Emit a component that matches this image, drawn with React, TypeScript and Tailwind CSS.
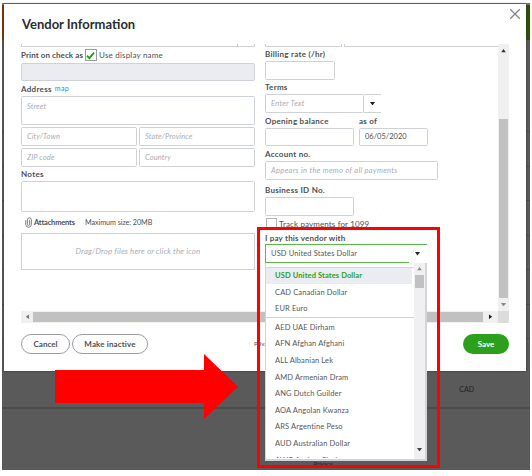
const currencies = [
  "AED UAE Dirham",
  "AFN Afghan Afghani",
  "ALL Albanian Lek",
  "AMD Armenian Dram",
  "ANG Dutch Guilder",
  "AOA Angolan Kwanza",
  "ARS Argentine Peso",
  "AUD Australian Dollar",
  "AWG Aruban Florin",
];

const Caret = ({ className = "" }) => (
  <svg viewBox="0 0 6 4" preserveAspectRatio="none" className={`h-[3.5px] w-[5px] shrink-0 fill-current ${className}`}>
    <path d="M0 0h6L3 4z" />
  </svg>
);

const Label = ({ children, className = "" }) => (
  <div className={`flex items-center whitespace-nowrap text-[8px] font-bold leading-none text-[#4d5055] ${className}`}>
    {children}
  </div>
);

const Field = ({ children, className = "", fill = "bg-white", text = "italic text-[#a9acb5]" }) => (
  <div className={`flex items-center whitespace-nowrap rounded-[1.5px] border border-[#cfd1d8] pl-[5px] text-[7.5px] leading-none ${fill} ${text} ${className}`}>
    {children}
  </div>
);

const LeftColumn = () => (
  <div className="flex w-[234px] flex-col">
    <div className="flex h-[3px] justify-end rounded-b-[1px] border border-t-0 border-[#cfd1d8] pr-[16px]">
      <div className="h-[2px] w-px bg-[#cfd1d8]" />
    </div>
    <Label className="h-[16px]">
      <span className="tracking-[0.08px]">Print on check as</span>
      <span className="ml-[2px] flex h-[12px] w-[12px] items-center justify-center border border-[#9b9da3]">
        <svg viewBox="0 0 10 10" className="h-[9px] w-[9px]" fill="none" stroke="#18a010" strokeWidth="2">
          <path d="M1 5.2l2.7 2.7L9 1.8" />
        </svg>
      </span>
      <span className="ml-[2px] font-normal tracking-[0.2px]">Use display name</span>
    </Label>
    <Field className="h-[18px]" fill="bg-[#ebecf1]" />
    <Label className="h-[15px] tracking-[0.3px]">
      Address <span className="ml-[3px] text-[7px] font-normal text-[#2090dd]">map</span>
    </Label>
    <div className="flex h-[29px] rounded-[1.5px] border border-[#cfd1d8] pl-[5px] pt-[6px] text-[7.5px] italic leading-none tracking-[0.1px] text-[#a9acb5]">
      Street
    </div>
    <div className="mt-[2px] grid grid-cols-2 gap-[2px] tracking-[0.1px]">
      <Field className="h-[19px]">City/Town</Field>
      <Field className="h-[19px]">State/Province</Field>
      <Field className="h-[19px]">ZIP code</Field>
      <Field className="h-[19px]">Country</Field>
    </div>
    <Label className="h-[14px] tracking-[0.3px]">Notes</Label>
    <Field className="h-[31px]" />
    <Label className="h-[21px] pl-[4px]">
      <svg viewBox="0 0 8 12" className="mr-[2px] h-[11px] w-[7px]" fill="none" stroke="#5c5f64" strokeWidth="0.9">
        <path d="M5.3 3v5a1.3 1.3 0 0 1-2.6 0V3a2.2 2.2 0 0 1 4.6 0v5.2a3.2 3.2 0 0 1-6.5 0V3.5" />
      </svg>
      <span className="w-[51px] text-[7.5px] tracking-[-0.18px]">Attachments</span>
      <span className="text-[7.2px] font-normal tracking-[-0.05px]">Maximum size: 20MB</span>
    </Label>
    <div className="flex h-[37px] items-center justify-center border border-[#cfd1d8] text-[7.8px] italic tracking-[0.18px] text-[#a9acb5]">
      Drag/Drop files here or click the icon
    </div>
  </div>
);

const RightColumn = () => (
  <div className="ml-[10px] flex w-[233px] flex-col tracking-[0.27px]">
    <div className="flex h-[3px] gap-[2px]">
      <div className="w-[77px] border border-t-0 border-[#cfd1d8]" />
      <div className="flex-1 border-b border-l border-[#cfd1d8]" />
    </div>
    <Label className="h-[14px]">Billing rate (/hr)</Label>
    <Field className="h-[19px] w-[70px]" />
    <Label className="h-[14px]">Terms</Label>
    <div className="flex w-[116px]">
      <Field className="h-[19px] w-[99px]">Enter Text</Field>
      <div className="flex h-[19px] flex-1 items-center justify-center border-y border-[#cfd1d8] text-[#1d1d1d]">
        <Caret />
      </div>
    </div>
    <div className="flex h-[15px]">
      <Label className="w-[94px]">Opening balance</Label>
      <Label>as of</Label>
    </div>
    <div className="flex gap-[5px]">
      <Field className="h-[18px] w-[89px]" />
      <Field className="h-[18px] w-[69px] tracking-[0px]" text="text-[#4d5055]">06/05/2020</Field>
    </div>
    <Label className="h-[15px]">Account no.</Label>
    <Field className="h-[19px] w-[173px] tracking-[0.33px]">Appears in the memo of all payments</Field>
    <Label className="h-[17px] pt-[3px]">Business ID No.</Label>
    <Field className="h-[19px] w-[89px]" />
    <div className="mt-[2px] flex h-[12px] items-center whitespace-nowrap text-[8px] leading-none tracking-[0.13px] text-[#4d5055]">
      <span className="ml-px mr-[2px] h-[12px] w-[11px] border border-[#b2b4ba]" />
      Track payments for 1099
    </div>
    <Label className="h-[15px] tracking-[0.2px]">I pay this vendor with</Label>
  </div>
);

const Option = ({ children, className = "" }) => (
  <div className={`flex h-[16.67px] shrink-0 items-center whitespace-nowrap pl-[9px] ${className}`}>{children}</div>
);

const CurrencySelect = () => (
  <div className="absolute left-[265px] top-[244px] w-[162px] text-[7.5px] leading-none tracking-[0.12px] text-[#54575c]">
    <div className="relative flex h-[19px] items-center justify-between border-l border-t border-[#5bb947] bg-white pl-[5px] pr-[7px]">
      USD United States Dollar
      <Caret className="text-[#222]" />
      <div className="absolute bottom-0 left-0 h-px w-[143px] bg-[#5bb947]" />
    </div>
    <div className="flex h-[198px] border-b-2 border-l border-r-2 border-[#d2d4da] bg-white">
      <div className="flex h-[195px] w-[148px] flex-col overflow-hidden">
        <div className="h-[4.5px] shrink-0 border-b border-[#d2d4da]" />
        <Option className="mr-[2px] bg-[#ebecf1] font-bold text-[#2ca01c]">USD United States Dollar</Option>
        <Option>CAD Canadian Dollar</Option>
        <Option>EUR Euro</Option>
        <div className="mb-[0.5px] h-px shrink-0 bg-[#cfd1d8]" />
        {currencies.map((name) => (
          <Option key={name}>{name}</Option>
        ))}
      </div>
      <div className="flex flex-1 flex-col items-center justify-between bg-[#f0f0f0] pb-[8px]">
        <div className="flex w-full flex-col items-center">
          <div className="flex h-[12px] items-center text-[#8a8a8a]">
            <Caret className="rotate-180" />
          </div>
          <div className="h-[13px] w-[9px] bg-[#c1c1c1]" />
        </div>
        <Caret className="text-[#444]" />
      </div>
    </div>
  </div>
);

const VendorModal = () => (
  <div className="absolute left-[4px] top-[4px] flex h-[367px] w-[522px] flex-col bg-white shadow-[0_0_2px_#333]">
    <div className="flex h-[40px] items-start justify-between pl-[18px] pr-[6px]">
      <h1 className="mt-[12px] text-[13px] font-bold leading-[16px] text-[#2b2d31]">Vendor Information</h1>
      <svg viewBox="0 0 10 10" className="mt-[5px] h-[10px] w-[10px]" stroke="#84868b" strokeWidth="1.3">
        <path d="M0 0l10 10M10 0L0 10" />
      </svg>
    </div>
    <div className="ml-[17px] flex h-[267px] w-[488px]">
      <LeftColumn />
      <RightColumn />
      <div className="flex w-[11px] flex-col items-center justify-between bg-[#f0f0f0] py-[5px]">
        <Caret className="rotate-180 text-[#333]" />
        <div className="mt-[62px] h-[179px] w-[9px] bg-[#c1c1c1]" />
        <Caret className="text-[#888]" />
      </div>
    </div>
    <div className="ml-[17px] flex h-[12px] w-[488px] items-center bg-[#f0f0f0]">
      <div className="flex w-[12px] justify-center text-[#777]">
        <Caret className="rotate-90" />
      </div>
      <div className="h-[10px] w-[450px] bg-[#c1c1c1]" />
      <div className="flex flex-1 justify-center text-[#222]">
        <Caret className="-rotate-90" />
      </div>
      <div className="h-full w-[11px] bg-[#dcdcdc]" />
    </div>
    <div className="ml-[17px] mt-[11px] flex h-[20px] w-[488px] items-stretch text-[8px] font-bold leading-none text-[#4d5055]">
      <div className="flex w-[49px] items-center justify-center rounded-full border border-[#9b9da3]">Cancel</div>
      <div className="ml-[2px] flex w-[76px] items-center justify-center rounded-full border border-[#9b9da3] tracking-[0.13px]">
        Make inactive
      </div>
      <div className="ml-[106px] flex items-center text-[6px] font-normal">Privacy</div>
      <div className="ml-auto flex w-[46px] items-center justify-center rounded-full bg-[#2ca01c] text-white">Save</div>
    </div>
  </div>
);

export default function App() {
  return (
    <div className="relative h-[476px] w-[532px] overflow-hidden bg-white font-['Lato',sans-serif]">
      <div className="ml-[2px] flex h-[470px] w-[528px] flex-col pt-[3px]">
        <div className="h-[2px] bg-[#777]" />
        <div className="flex h-[35px] justify-between bg-[#5a5a5a]">
          <div className="w-[2px] bg-[#7d3908]" />
          <div className="w-[4px] bg-[#285400]" />
        </div>
        <div className="h-[92px] border-b border-[#4b4b4b] bg-[#5a5a5a]" />
        {[0, 1, 2, 3, 4, 5].map((row) => (
          <div key={row} className="h-[34.5px] border-b border-[#4b4b4b] bg-[#5a5a5a]" />
        ))}
        <div className="flex h-[70px] items-end justify-end border-b-2 border-[#4b4b4b] bg-[#5a5a5a] pb-[14px] pr-[56px] text-[7px] leading-none text-[#202020]">
          CAD
        </div>
        <div className="flex flex-1 items-end justify-center bg-[#5a5a5a] pb-[3px] pr-[10px] text-[6px] leading-none text-[#202020]">
          <span className="ml-[124px]">Privacy</span>
        </div>
      </div>
      <VendorModal />
      <CurrencySelect />
      <svg viewBox="0 0 183 65" className="absolute left-[55px] top-[354px] h-[65px] w-[183px] fill-[#ff0000]">
        <path d="M0 16h149V0l34 32.7L149 65V49H0z" />
      </svg>
      <div className="absolute left-[257px] top-[227px] h-[241px] w-[183px] border-[3px] border-[#ff0000]" />
    </div>
  );
}
